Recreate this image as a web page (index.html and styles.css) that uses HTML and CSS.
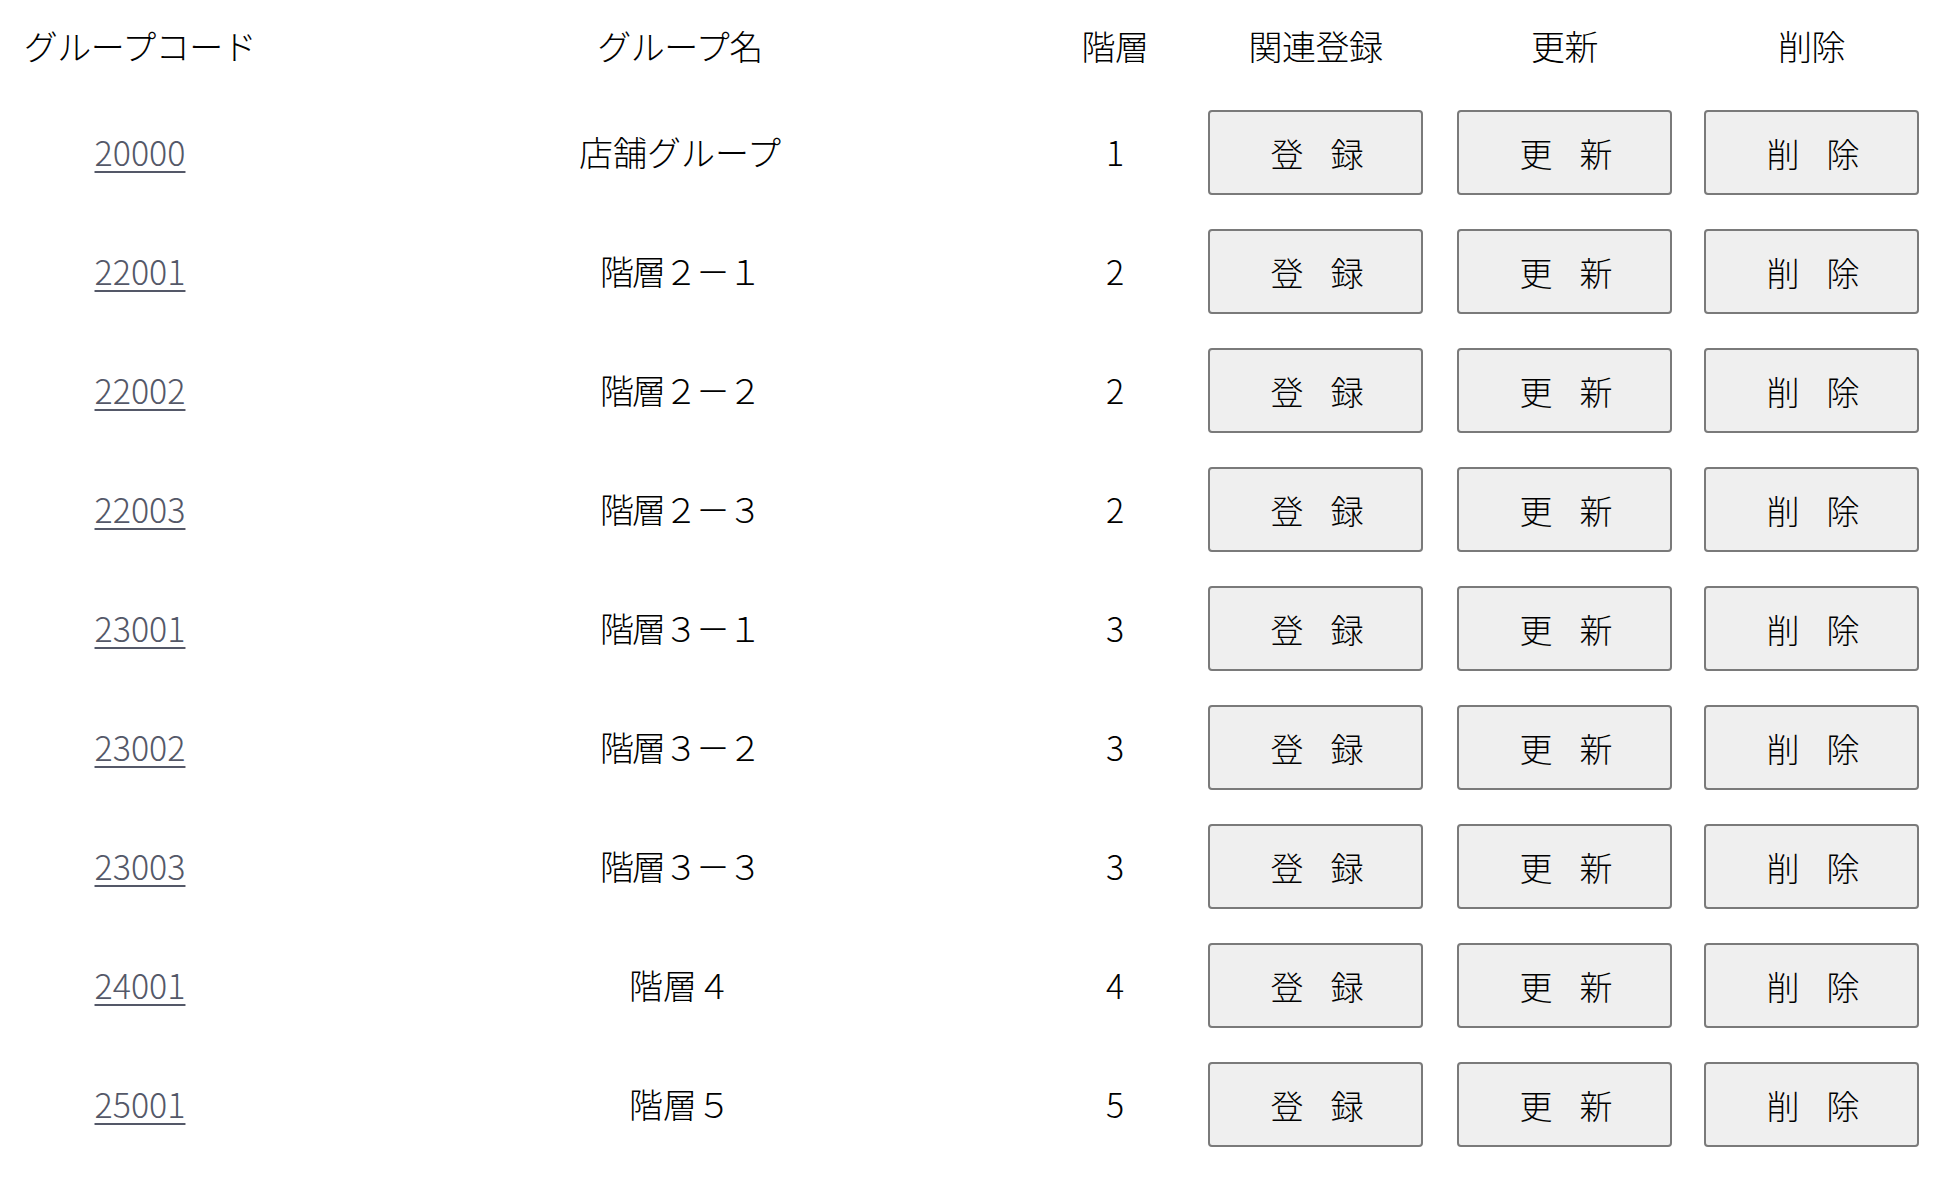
FILE: index.html
```html
<!DOCTYPE html>
<html lang="ja">
<head>
<meta charset="utf-8">
<title>グループ一覧</title>
<link rel="stylesheet" href="styles.css">
</head>
<body>
<div class="list">
  <div class="row head">
    <div class="cell">グループコード</div>
    <div class="cell">グループ名</div>
    <div class="cell">階層</div>
    <div class="cell c4">関連登録</div>
    <div class="cell c5">更新</div>
    <div class="cell c6">削除</div>
  </div>
  <div class="row">
    <div class="cell"><a href="#" class="code">20000</a></div>
    <div class="cell">店舗グループ</div>
    <div class="cell">1</div>
    <div class="cell c4"><button class="btn">登　録</button></div>
    <div class="cell c5"><button class="btn">更　新</button></div>
    <div class="cell c6"><button class="btn">削　除</button></div>
  </div>
  <div class="row">
    <div class="cell"><a href="#" class="code">22001</a></div>
    <div class="cell name">階層２－１</div>
    <div class="cell">2</div>
    <div class="cell c4"><button class="btn">登　録</button></div>
    <div class="cell c5"><button class="btn">更　新</button></div>
    <div class="cell c6"><button class="btn">削　除</button></div>
  </div>
  <div class="row">
    <div class="cell"><a href="#" class="code">22002</a></div>
    <div class="cell name">階層２－２</div>
    <div class="cell">2</div>
    <div class="cell c4"><button class="btn">登　録</button></div>
    <div class="cell c5"><button class="btn">更　新</button></div>
    <div class="cell c6"><button class="btn">削　除</button></div>
  </div>
  <div class="row">
    <div class="cell"><a href="#" class="code">22003</a></div>
    <div class="cell name">階層２－３</div>
    <div class="cell">2</div>
    <div class="cell c4"><button class="btn">登　録</button></div>
    <div class="cell c5"><button class="btn">更　新</button></div>
    <div class="cell c6"><button class="btn">削　除</button></div>
  </div>
  <div class="row">
    <div class="cell"><a href="#" class="code">23001</a></div>
    <div class="cell name">階層３－１</div>
    <div class="cell">3</div>
    <div class="cell c4"><button class="btn">登　録</button></div>
    <div class="cell c5"><button class="btn">更　新</button></div>
    <div class="cell c6"><button class="btn">削　除</button></div>
  </div>
  <div class="row">
    <div class="cell"><a href="#" class="code">23002</a></div>
    <div class="cell name">階層３－２</div>
    <div class="cell">3</div>
    <div class="cell c4"><button class="btn">登　録</button></div>
    <div class="cell c5"><button class="btn">更　新</button></div>
    <div class="cell c6"><button class="btn">削　除</button></div>
  </div>
  <div class="row">
    <div class="cell"><a href="#" class="code">23003</a></div>
    <div class="cell name">階層３－３</div>
    <div class="cell">3</div>
    <div class="cell c4"><button class="btn">登　録</button></div>
    <div class="cell c5"><button class="btn">更　新</button></div>
    <div class="cell c6"><button class="btn">削　除</button></div>
  </div>
  <div class="row">
    <div class="cell"><a href="#" class="code">24001</a></div>
    <div class="cell">階層４</div>
    <div class="cell">4</div>
    <div class="cell c4"><button class="btn">登　録</button></div>
    <div class="cell c5"><button class="btn">更　新</button></div>
    <div class="cell c6"><button class="btn">削　除</button></div>
  </div>
  <div class="row">
    <div class="cell"><a href="#" class="code">25001</a></div>
    <div class="cell">階層５</div>
    <div class="cell">5</div>
    <div class="cell c4"><button class="btn">登　録</button></div>
    <div class="cell c5"><button class="btn">更　新</button></div>
    <div class="cell c6"><button class="btn">削　除</button></div>
  </div>
</div>
</body>
</html>
```

FILE: styles.css
```css
html, body {
  margin: 0;
  padding: 0;
  background: #ffffff;
}

body {
  font-family: "Noto Sans CJK JP", "Noto Sans", sans-serif;
  font-weight: 300;
  font-size: 34px;
  color: #000000;
}

.list {
  display: flex;
  flex-direction: column;
}

.row {
  display: grid;
  grid-template-columns: 280px 800px 70px 273px 249px 247px;
  align-items: center;
  height: 119px;
}

.row.head {
  height: 93px;
}

.row.head .cell {
  letter-spacing: -0.5px;
}

.cell {
  text-align: center;
  white-space: nowrap;
  line-height: 1.2;
}

.cell.name {
  letter-spacing: -2px;
}

.c4 { padding-left: 58px; }
.c5 { padding-left: 34px; }
.c6 { padding-left: 32px; }

.code {
  color: #545868;
  text-decoration: underline;
  text-decoration-thickness: 2px;
  text-underline-offset: 5px;
}

.btn {
  width: 215px;
  height: 85px;
  box-sizing: border-box;
  background: #efefef;
  border: 2px solid #7a7a7a;
  border-radius: 4px;
  font-family: "Noto Sans CJK JP", sans-serif;
  font-weight: 300;
  font-size: 33px;
  letter-spacing: -3px;
  color: #000000;
  padding: 0;
  display: block;
}
```
